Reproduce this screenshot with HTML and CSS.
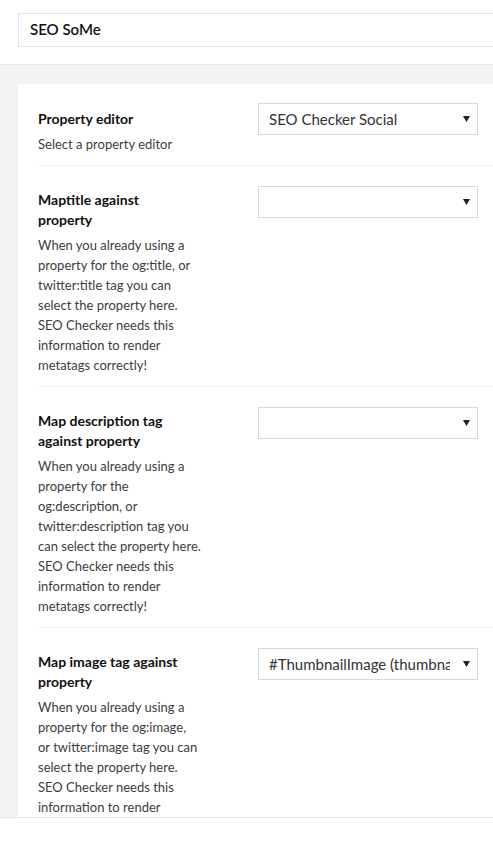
FILE: index.html
```html
<!DOCTYPE html>
<html lang="en">
<head>
    <meta charset="UTF-8">
    <title>SEO SoMe</title>
    <link rel="stylesheet" href="styles.css">
</head>
<body>
<div id="header">
    <div class="name-box">SEO SoMe</div>
</div>
<div id="main">
    <div id="panel">
        <div class="row">
            <div class="label">
                <h3>Property editor</h3>
                <p>Select a property editor</p>
            </div>
            <div class="select">
                <span>SEO Checker Social</span>
                <svg width="7" height="6" viewBox="0 0 7 6"><path d="M0 0H7L3.5 6Z" fill="#222"/></svg>
            </div>
        </div>
        <div class="row">
            <div class="label">
                <h3>Maptitle against<br>property</h3>
                <p>When you already using a<br>property for the og:title, or<br>twitter:title tag you can<br>select the property here.<br>SEO Checker needs this<br>information to render<br>metatags correctly!</p>
            </div>
            <div class="select">
                <span></span>
                <svg width="7" height="6" viewBox="0 0 7 6"><path d="M0 0H7L3.5 6Z" fill="#222"/></svg>
            </div>
        </div>
        <div class="row">
            <div class="label">
                <h3>Map description tag<br>against property</h3>
                <p>When you already using a<br>property for the<br>og:description, or<br>twitter:description tag you<br>can select the property here.<br>SEO Checker needs this<br>information to render<br>metatags correctly!</p>
            </div>
            <div class="select">
                <span></span>
                <svg width="7" height="6" viewBox="0 0 7 6"><path d="M0 0H7L3.5 6Z" fill="#222"/></svg>
            </div>
        </div>
        <div class="row">
            <div class="label">
                <h3>Map image tag against<br>property</h3>
                <p>When you already using a<br>property for the og:image,<br>or twitter:image tag you can<br>select the property here.<br>SEO Checker needs this<br>information to render<br>metatags correctly!</p>
            </div>
            <div class="select">
                <span>#ThumbnailImage (thumbnailImage)</span>
                <svg width="7" height="6" viewBox="0 0 7 6"><path d="M0 0H7L3.5 6Z" fill="#222"/></svg>
            </div>
        </div>
    </div>
</div>
<div id="footer"></div>
</body>
</html>
```

FILE: styles.css
```css
*{
    margin: 0;
    padding: 0;
    box-sizing: border-box;
}
body{
    width: 493px;
    height: 841px;
    overflow: hidden;
    background: #fff;
    font-family: Lato, "Open Sans", sans-serif;
    color: #1d1d1f;
}

#header{
    height: 65px;
    padding: 13px 0 0 18px;
    border-bottom: 1px solid #e9e9e9;
    overflow: hidden;
}
.name-box{
    width: 520px;
    height: 34px;
    border: 1px solid #e4e4e4;
    padding-left: 11px;
    font-size: 15px;
    font-weight: 600;
    line-height: 31px;
    color: #111;
}

#main{
    height: 752px;
    background: #f4f3f3;
    padding: 19px 0 0 18px;
    overflow: hidden;
}
#panel{
    width: 520px;
    height: 100%;
    background: #fff;
    padding: 0 20px;
}

.row{
    display: flex;
    padding: 19px 0 11px;
    border-bottom: 1px solid #f2f2f2;
}
.row + .row{
    padding-top: 20px;
}
.label{
    width: 220px;
    flex-shrink: 0;
    padding-top: 6px;
}
.row + .row .label{
    padding-top: 4px;
}
.label h3{
    font-size: 14px;
    font-weight: 700;
    line-height: 20px;
    color: #111;
}
.label p{
    margin-top: 5px;
    font-size: 13px;
    line-height: 20px;
    color: #3d3d3d;
}

.select{
    width: 220px;
    height: 32px;
    border: 1px solid #d9d9d9;
    display: flex;
    align-items: center;
    padding: 0 7px 0 10px;
    font-size: 15px;
    color: #333;
}
.select span{
    flex: 1;
    white-space: nowrap;
    overflow: hidden;
    margin-right: 13px;
}
.select svg{
    flex-shrink: 0;
}

#footer{
    height: 24px;
    border-top: 1px solid #e6e6e6;
    background: #fff;
}
```
